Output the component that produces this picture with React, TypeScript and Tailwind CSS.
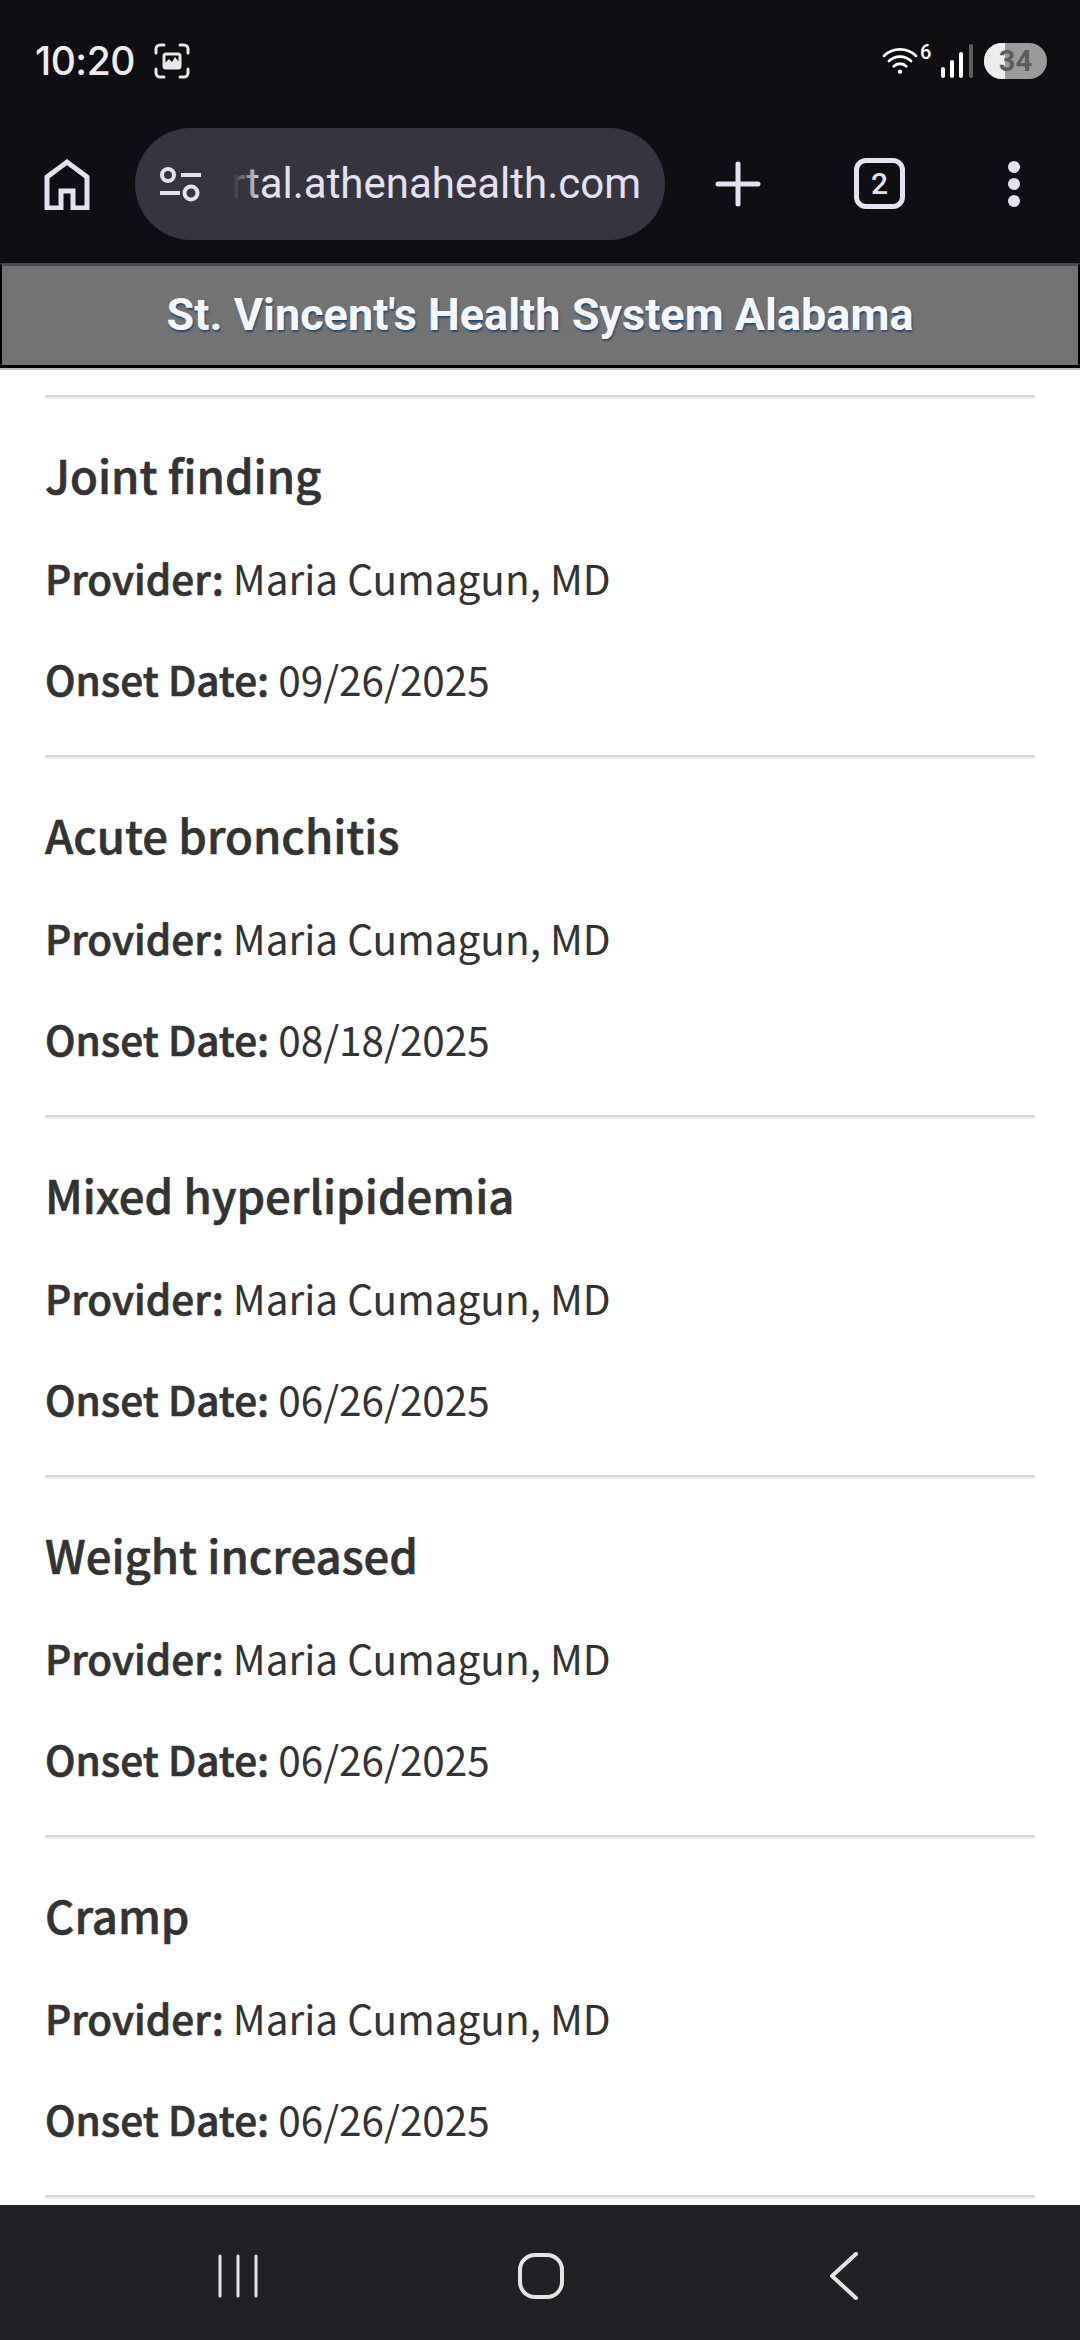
const conditions = [
  { name: 'Joint finding', date: '09/26/2025' },
  { name: 'Acute bronchitis', date: '08/18/2025' },
  { name: 'Mixed hyperlipidemia', date: '06/26/2025' },
  { name: 'Weight increased', date: '06/26/2025' },
  { name: 'Cramp', date: '06/26/2025' },
];

const bodyFont = "font-['Noto_Sans_CJK_SC','Noto_Sans',sans-serif]";

function Rule() {
  return <hr className="h-[4px] border-0 border-t-[2px] border-b-[2px] border-t-[#d4d4d4] border-b-[#ececec]" />;
}

function StatusBar() {
  return (
    <div className="flex h-[122px] items-start justify-between pl-[35px] pr-[33px] pt-[36px]">
      <div className="flex items-center gap-[19px]">
        <span className="font-['Inter',sans-serif] text-[39px] font-medium leading-[50px] tracking-[-0.5px] text-[#ececec]">10:20</span>
        <svg width="36" height="36" viewBox="0 0 36 36" fill="none" stroke="#e8e8e8" strokeWidth="3" strokeLinecap="round">
          <path d="M2 10V6a4 4 0 0 1 4-4h4M26 2h4a4 4 0 0 1 4 4v4M34 26v4a4 4 0 0 1-4 4h-4M10 34H6a4 4 0 0 1-4-4v-4" />
          <rect x="10" y="11" width="16" height="14" rx="2" />
          <path d="M11 20l4-4 3 3 3-5 4 5v5H11z" fill="#e8e8e8" stroke="none" />
        </svg>
      </div>
      <div className="flex items-center pt-[7px]">
        <svg className="mr-[23px]" width="36" height="30" viewBox="0 0 40 34" fill="none" stroke="#fff" strokeWidth="3.2" strokeLinecap="round">
          <path d="M2 11a26 26 0 0 1 36 0M7.500 17a18 18 0 0 1 25 0M13 23a10 10 0 0 1 14 0" />
          <circle cx="20" cy="29" r="2.500" fill="#fff" stroke="none" />
        </svg>
        <div className="relative h-[36px] w-[33px]">
          <span className="absolute left-[-21px] top-[-1px] font-['Roboto',sans-serif] text-[20px] font-medium leading-none text-white">6</span>
          <svg className="absolute left-0 top-0" width="33" height="36" viewBox="0 0 33 36">
            <rect x="0" y="24" width="4" height="11" rx="2" fill="#fff" />
            <rect x="9" y="17" width="4" height="18" rx="2" fill="#fff" />
            <rect x="18" y="9" width="4" height="26" rx="2" fill="#fff" />
            <rect x="28" y="1" width="4" height="34" rx="2" fill="#5f5f62" />
          </svg>
        </div>
        <div className="relative ml-[10px] flex h-[36px] w-[63px] items-center justify-center overflow-hidden rounded-full bg-[#9b9b9b]">
          <div className="absolute inset-y-0 left-0 w-[21px] bg-[#ededed]" />
          <span className="relative font-['Roboto',sans-serif] text-[29px] font-bold leading-none text-[#5c5c5c]">34</span>
        </div>
      </div>
    </div>
  );
}

function Toolbar() {
  return (
    <div className="flex h-[141px] items-start pl-[44px] pt-[6px]">
      <svg className="mt-[30px]" width="46" height="52" viewBox="0 0 46 52" fill="none" stroke="#e6e1f1" strokeWidth="5">
        <path d="M3 50V19L23 4l20 15v31H29V33H17v17z" strokeLinejoin="miter" />
      </svg>
      <div className="ml-[45px] flex h-[112px] w-[530px] items-center rounded-full bg-[#35343f] pl-[24px]">
        <svg className="shrink-0" width="42" height="36" viewBox="0 0 42 36" fill="none" stroke="#e6e1f1" strokeWidth="4">
          <circle cx="9" cy="9" r="6" />
          <path d="M22 9h20M1 27h20" />
          <circle cx="32" cy="27" r="6.500" />
        </svg>
        <div className="relative ml-[20px] w-[420px] overflow-hidden">
          <span className="block whitespace-nowrap text-right font-['Roboto',sans-serif] text-[42px] leading-[50px] text-[#e6e1f1]">rtal.athenahealth.com</span>
          <div className="absolute inset-y-0 left-0 w-[40px] bg-gradient-to-r from-[#35343f] from-[30%] to-transparent" />
        </div>
      </div>
      <svg className="ml-[50px] mt-[33px]" width="46" height="46" viewBox="0 0 46 46" fill="none" stroke="#e6e1f1" strokeWidth="5" strokeLinecap="round">
        <path d="M23 3v40M3 23h40" />
      </svg>
      <div className="ml-[93px] mt-[30px] flex h-[51px] w-[51px] items-center justify-center rounded-[12px] border-[5px] border-[#e6e1f1] font-['Roboto',sans-serif] text-[30px] font-medium text-[#e6e1f1]">2</div>
      <div className="ml-[103px] mt-[33px] flex h-[46px] flex-col justify-between">
        <span className="h-[12px] w-[12px] rounded-full bg-[#e6e1f1]" />
        <span className="h-[12px] w-[12px] rounded-full bg-[#e6e1f1]" />
        <span className="h-[12px] w-[12px] rounded-full bg-[#e6e1f1]" />
      </div>
    </div>
  );
}

function PortalHeader() {
  return (
    <div className="flex h-[105px] shrink-0 items-center justify-center border-x-2 border-y-[3px] border-x-black border-b-black border-t-[#4a4a50] bg-[#737373] pb-[2px] shadow-[0_2px_0_#b9bcc2]">
      <h1 className="font-['Roboto',sans-serif] text-[45px] font-bold leading-none text-[#f4f7fb] [text-shadow:1px_2px_2px_#26496e]">St. Vincent's Health System Alabama</h1>
    </div>
  );
}

function Condition({ name, date }: { name: string; date: string }) {
  return (
    <div className="flex h-[360px] flex-col pt-[45px] text-[#333]">
      <h2 className="text-[45.500px] font-medium leading-[60px] [-webkit-text-stroke:0.6px_#333]">{name}</h2>
      <p className="mt-[45px] text-[40.500px] font-normal leading-[58px]">
        <strong className="font-medium [-webkit-text-stroke:0.7px_#333]">Provider:</strong> Maria Cumagun, MD
      </p>
      <p className="mt-[43px] text-[40.500px] font-normal leading-[58px]">
        <strong className="font-medium [-webkit-text-stroke:0.7px_#333]">Onset Date:</strong> {date}
      </p>
      <div className="mt-auto">
        <Rule />
      </div>
    </div>
  );
}

function NavBar() {
  return (
    <div className="flex h-[135px] shrink-0 items-center bg-[#202025] pt-[6px]">
      <svg className="ml-[215px]" width="46" height="44" viewBox="0 0 46 44" fill="none" stroke="#e4e4e4" strokeWidth="3" strokeLinecap="round">
        <path d="M5 2v40M23 2v40M41 2v40" />
      </svg>
      <svg className="ml-[257px]" width="46" height="46" viewBox="0 0 46 46" fill="none" stroke="#e4e4e4" strokeWidth="4">
        <rect x="2" y="2" width="42" height="42" rx="15" />
      </svg>
      <svg className="ml-[265px]" width="30" height="48" viewBox="0 0 30 48" fill="none" stroke="#e4e4e4" strokeWidth="4" strokeLinecap="round" strokeLinejoin="round">
        <path d="M27 2L3 24l24 22" />
      </svg>
    </div>
  );
}

export default function App() {
  return (
    <div className="flex h-[2340px] w-[1080px] flex-col overflow-hidden bg-white">
      <div className="bg-[#0e0e13]">
        <StatusBar />
        <Toolbar />
      </div>
      <PortalHeader />
      <main className={`flex-1 overflow-hidden px-[45px] ${bodyFont}`}>
        <div className="flex h-[31px] flex-col justify-end">
          <Rule />
        </div>
        {conditions.map((c) => (
          <Condition key={c.name} name={c.name} date={c.date} />
        ))}
      </main>
      <NavBar />
    </div>
  );
}
